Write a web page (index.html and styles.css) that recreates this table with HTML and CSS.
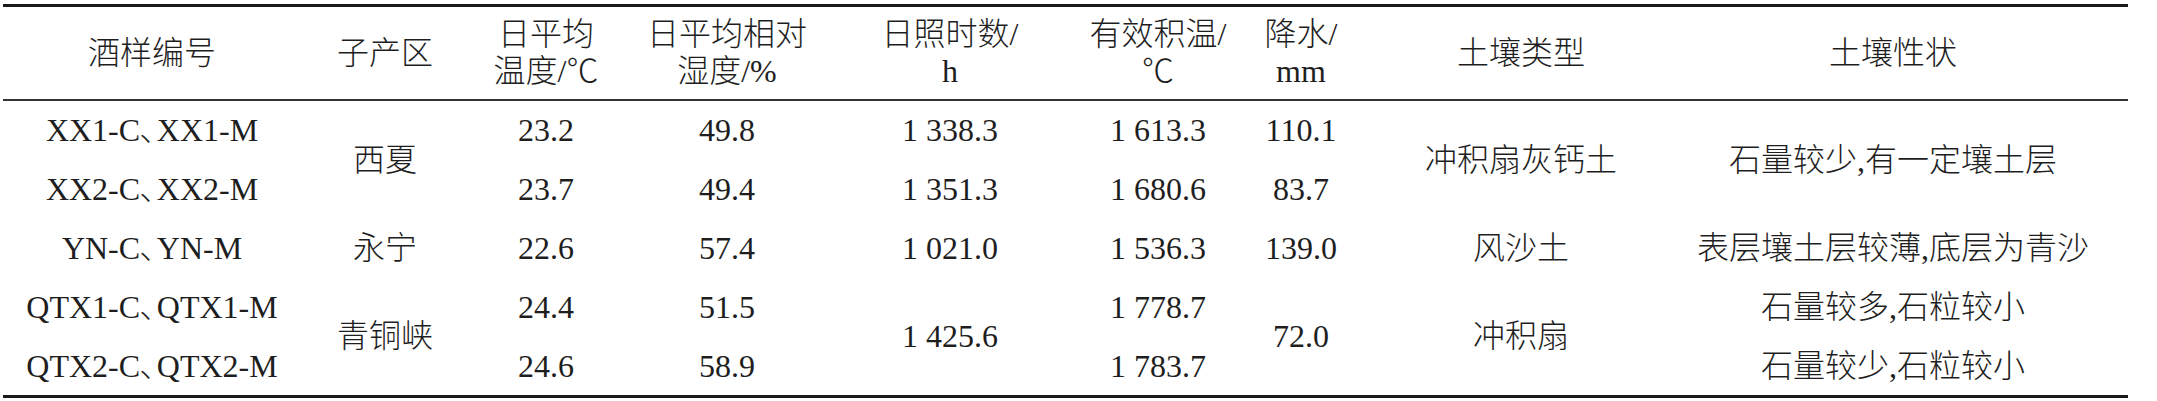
FILE: index.html
```html
<!DOCTYPE html>
<html lang="zh-CN">
<head>
<meta charset="utf-8">
<title>酒样产区气候与土壤</title>
<link rel="stylesheet" href="styles.css">
</head>
<body>
<div class="page">
<table class="data">
<colgroup>
<col class="c1"><col class="c2"><col class="c3"><col class="c4"><col class="c5"><col class="c6"><col class="c7"><col class="c8"><col class="c9">
</colgroup>
<thead>
<tr>
<th>酒样编号</th>
<th>子产区</th>
<th>日平均<br>温度/℃</th>
<th>日平均相对<br>湿度/%</th>
<th>日照时数/<br>h</th>
<th>有效积温/<br>℃</th>
<th>降水/<br>mm</th>
<th>土壤类型</th>
<th class="last">土壤性状</th>
</tr>
</thead>
<tbody>
<tr>
<td>XX1-C<span class="dun">、</span>XX1-M</td>
<td rowspan="2">西夏</td>
<td>23.2</td>
<td>49.8</td>
<td>1 338.3</td>
<td>1 613.3</td>
<td>110.1</td>
<td rowspan="2">冲积扇灰钙土</td>
<td rowspan="2" class="last">石量较少,有一定壤土层</td>
</tr>
<tr>
<td>XX2-C<span class="dun">、</span>XX2-M</td>
<td>23.7</td>
<td>49.4</td>
<td>1 351.3</td>
<td>1 680.6</td>
<td>83.7</td>
</tr>
<tr>
<td>YN-C<span class="dun">、</span>YN-M</td>
<td>永宁</td>
<td>22.6</td>
<td>57.4</td>
<td>1 021.0</td>
<td>1 536.3</td>
<td>139.0</td>
<td>风沙土</td>
<td class="last">表层壤土层较薄,底层为青沙</td>
</tr>
<tr>
<td>QTX1-C<span class="dun">、</span>QTX1-M</td>
<td rowspan="2">青铜峡</td>
<td>24.4</td>
<td>51.5</td>
<td rowspan="2">1 425.6</td>
<td>1 778.7</td>
<td rowspan="2">72.0</td>
<td rowspan="2">冲积扇</td>
<td class="last">石量较多,石粒较小</td>
</tr>
<tr>
<td>QTX2-C<span class="dun">、</span>QTX2-M</td>
<td>24.6</td>
<td>58.9</td>
<td>1 783.7</td>
<td class="last">石量较少,石粒较小</td>
</tr>
</tbody>
</table>
</div>
</body>
</html>
```
FILE: styles.css
```css
html, body {
  margin: 0;
  padding: 0;
  background: #ffffff;
}

.page {
  padding: 4px 0 0 3px;
}

.data {
  width: 2125px;
  table-layout: fixed;
  border-collapse: collapse;
  font-family: "Liberation Serif", "Noto Sans CJK SC", serif;
  font-size: 32px;
  font-weight: 300;
  color: #1e1e1e;
  border-top: 3px solid #1a1a1a;
  border-bottom: 3px solid #1a1a1a;
}

.c1 { width: 298px; }
.c2 { width: 168px; }
.c3 { width: 154px; }
.c4 { width: 208px; }
.c5 { width: 238px; }
.c6 { width: 178px; }
.c7 { width: 108px; }
.c8 { width: 332px; }
.c9 { width: 441px; }

.data th,
.data td {
  padding: 0;
  text-align: center;
  vertical-align: middle;
  white-space: nowrap;
  font-weight: 300;
}

.data thead tr {
  border-bottom: 2px solid #333333;
}

.data th {
  height: 92px;
  line-height: 37px;
}

.data td {
  height: 58.8px;
  line-height: 36px;
}

.data .dun {
  letter-spacing: -0.45em;
  margin-left: -0.03em;
}

.data .last {
  padding-right: 29px;
}
```
